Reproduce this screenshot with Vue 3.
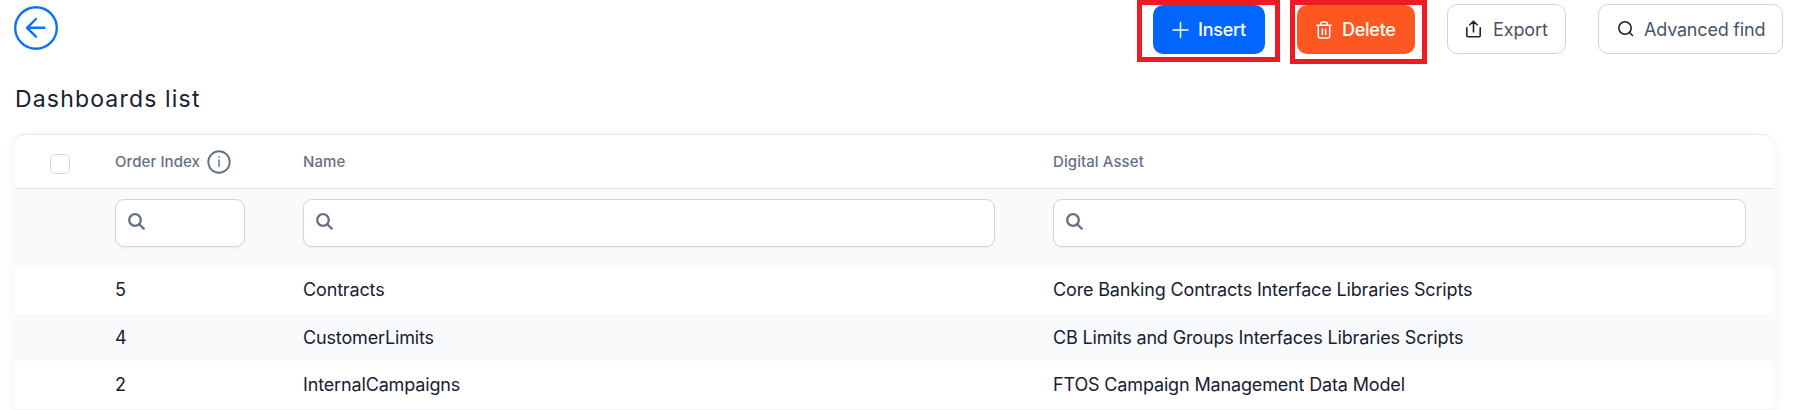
<script setup>
const columns = [
  { key: 'order', label: 'Order Index', info: true },
  { key: 'name', label: 'Name' },
  { key: 'asset', label: 'Digital Asset' },
]
const rows = [
  { order: 5, name: 'Contracts', asset: 'Core Banking Contracts Interface Libraries Scripts' },
  { order: 4, name: 'CustomerLimits', asset: 'CB Limits and Groups Interfaces Libraries Scripts' },
  { order: 2, name: 'InternalCampaigns', asset: 'FTOS Campaign Management Data Model' },
]
</script>

<template>
  <main class="page">
    <header class="toolbar">
      <button class="back" aria-label="Back">
        <svg width="44" height="44" viewBox="0 0 44 44">
          <circle cx="22" cy="22" r="20.8" />
          <path d="M30.5 21.8H13.5M22 13l-9 8.8 9 8.8" />
        </svg>
      </button>
      <div class="mark mark-insert">
        <button class="btn primary">
          <svg width="18" height="18" viewBox="0 0 18 18"><path d="M8.5 1.5v15M1 9h15" /></svg>
          <span>Insert</span>
        </button>
      </div>
      <div class="mark mark-delete">
        <button class="btn danger">
          <svg width="16" height="18" viewBox="0 0 16 18">
            <path d="M.8 4.3h14.4M4.8 4V2.4C4.8 1.4 5.4.9 6.4.9h3.2c1 0 1.6.5 1.6 1.5V4M2.3 4.5v10.6c0 1.3.7 2 2 2h7.4c1.3 0 2-.7 2-2V4.5M6.4 8v5.500M9.6 8v5.500" />
          </svg>
          <span>Delete</span>
        </button>
      </div>
      <button class="btn plain export">
        <svg width="16" height="18" viewBox="0 0 16 18"><path d="M7.5 12V1.4M3.8 4.8 7.5 1.2l3.7 3.600M.8 7.800v7.600c0 .9.5 1.400 1.400 1.400h10.600c.9 0 1.400-.5 1.400-1.400V7.800" /></svg>
        <span>Export</span>
      </button>
      <button class="btn plain find">
        <svg width="16" height="16" viewBox="0 0 16 16"><circle cx="7" cy="7" r="6.200" /><path d="m11.500 11.500 3 3" /></svg>
        <span>Advanced find</span>
      </button>
    </header>

    <h1>Dashboards list</h1>

    <section class="table">
      <div class="row head">
        <span class="check"></span>
        <div v-for="c in columns" :key="c.key" class="cell">
          <span>{{ c.label }}</span>
          <svg v-if="c.info" class="info" width="24" height="24" viewBox="0 0 24 24">
            <circle cx="12" cy="12" r="10.7" />
            <path class="stem" d="M12 9.500v7.300M12 6.300v1.500" />
          </svg>
        </div>
      </div>
      <div class="row filters">
        <span></span>
        <div v-for="c in columns" :key="c.key" class="filter">
          <svg width="17" height="17" viewBox="0 0 17 17"><circle cx="7" cy="7" r="5.800" /><path d="m11.200 11.200 4.500 4.400" /></svg>
        </div>
      </div>
      <div v-for="r in rows" :key="r.order" class="row data">
        <span></span>
        <span>{{ r.order }}</span>
        <span>{{ r.name }}</span>
        <span>{{ r.asset }}</span>
      </div>
    </section>
  </main>
</template>

<style>
body { margin: 0; background: #fff; }
</style>

<style scoped>
* { box-sizing: border-box; }
.page {
  width: 1812px;
  height: 410px;
  overflow: hidden;
  font-family: Inter, "Liberation Sans", sans-serif;
  color: #182033;
}
svg { display: block; flex: none; fill: none; stroke: currentColor; stroke-linecap: round; stroke-linejoin: round; }
button { font: inherit; margin: 0; padding: 0; }
.toolbar { display: flex; align-items: flex-start; height: 66px; padding-left: 14px; }
.back { margin: 6px auto 0 0; border: 0; background: none; color: #0f6fff; }
.back svg { stroke-width: 2.4; }
.mark { border: 5px solid #ed1c24; }
.mark-insert { width: 143px; height: 62px; padding-left: 11px; margin-right: 10px; }
.mark-delete { width: 137px; height: 64px; padding-left: 2px; margin-right: 20px; }
.btn {
  display: flex;
  align-items: center;
  height: 50px;
  border: 0;
  border-radius: 10px;
  font-size: 18px;
  font-weight: 500;
  line-height: 24px;
  white-space: nowrap;
}
.mark .btn { height: 49px; }
.btn span { padding-top: 1px; }
.primary { width: 112px; background: #06f; color: #fff; padding-left: 19px; gap: 8px; letter-spacing: -.25px; }
.danger { width: 118px; background: #ff5722; color: #fff; padding-left: 19px; gap: 10px; letter-spacing: -.25px; }
.mark .btn svg { stroke-width: 1.5; }
.plain { margin-top: 4px; border: 1px solid #d0d5dd; background: #fff; color: #475467; font-weight: 400; letter-spacing: -.2px; }
.plain svg { color: #1d2433; stroke-width: 1.6; }
.export { width: 119px; padding-left: 18px; gap: 11px; margin-right: 32px; letter-spacing: -.1px; }
.find { width: 185px; padding-left: 19px; gap: 10px; margin-right: 29px; }
h1 {
  margin: 18px 0 0 15px;
  font-size: 23px;
  line-height: 30px;
  font-weight: 400;
  letter-spacing: 1.17px;
}
.table {
  width: 1758px;
  margin: 20px 0 0 15px;
  border-top: 1px solid #e4e5e9;
  border-radius: 10px 10px 0 0;
  box-shadow: 0 4px 14px rgba(16, 40, 40, .07);
  background: #fff;
}
.row {
  display: grid;
  grid-template-columns: 42px 130px 692px 693px;
  column-gap: 58px;
}
.head { height: 54px; border-bottom: 1px solid #e1e4e8; align-items: center; font-size: 15px; font-weight: 450; letter-spacing: .08px; color: #667085; }
.check { width: 20px; height: 20px; margin: 5px 0 0 35px; border: 1px solid #d0d5dd; border-radius: 5px; }
.cell { display: flex; align-items: center; gap: 7px; white-space: nowrap; }
.info { stroke-width: 1.9; stroke-linecap: butt; }
.info .stem { stroke-width: 1.5; }
.filters { height: 78px; padding-top: 10px; background: #f9fafb; }
.filter { height: 48px; padding: 13px 0 0 12px; border: 1px solid #d0d5dd; border-radius: 9px; background: #fff; color: #667085; box-shadow: 0 1px 2px rgba(16, 24, 40, .05); }
.filter svg { stroke-width: 2.3; }
.data { height: 47px; padding-bottom: 1px; align-items: center; font-size: 18px; line-height: 24px; letter-spacing: -.15px; white-space: nowrap; }
.data:nth-child(even) { padding-bottom: 0; background: #f9fafb; }
.data:last-child { height: 49px; padding-bottom: 0; border-bottom: 1px solid #f2f4f5; }
</style>
